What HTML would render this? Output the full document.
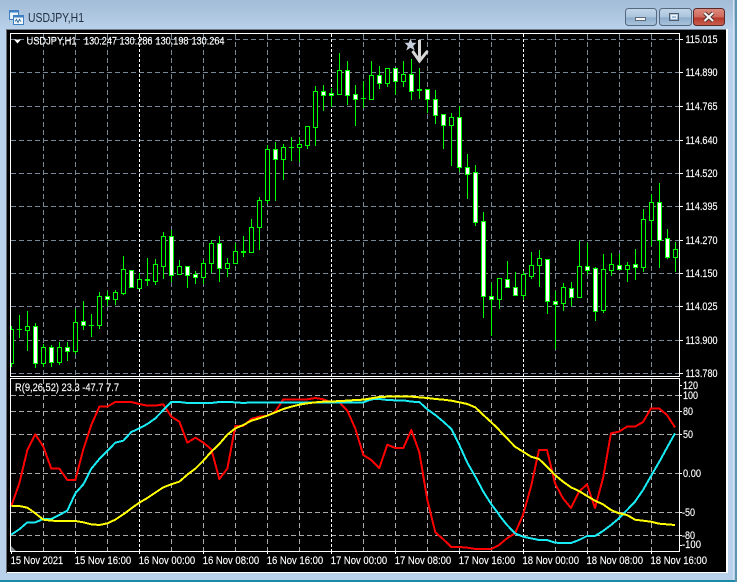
<!DOCTYPE html>
<html><head><meta charset="utf-8"><title>USDJPY,H1</title>
<style>html,body{margin:0;padding:0;background:#b9d1ea;overflow:hidden}svg{display:block}text{font-family:"Liberation Sans",sans-serif}</style></head>
<body>
<svg width="737" height="582" viewBox="0 0 737 582" xmlns="http://www.w3.org/2000/svg">
<defs>
<linearGradient id="bg" x1="0" y1="0" x2="0" y2="1"><stop offset="0" stop-color="#a3bcd7"/><stop offset="1" stop-color="#b9d1ea"/></linearGradient>
<linearGradient id="btn" x1="0" y1="0" x2="0" y2="1"><stop offset="0" stop-color="#c3d6e9"/><stop offset=".5" stop-color="#abc4dd"/><stop offset=".55" stop-color="#8fadcb"/><stop offset="1" stop-color="#a9c4de"/></linearGradient>
<linearGradient id="cls" x1="0" y1="0" x2="0" y2="1"><stop offset="0" stop-color="#dd8d80"/><stop offset=".5" stop-color="#cf6a5c"/><stop offset=".55" stop-color="#b5382a"/><stop offset="1" stop-color="#c9604f"/></linearGradient>
</defs>
<rect width="737" height="582" fill="#b9d1ea"/>
<rect width="737" height="30" fill="url(#bg)"/>
<rect y="580" width="737" height="2" fill="#1b8ca5"/>
<rect x="735" width="2" height="582" fill="#5f94b0"/>
<rect x="733" y="0" width="1" height="580" fill="#d5e4f2"/>
<!-- title icon -->
<g shape-rendering="crispEdges">
<rect x="9.5" y="10.5" width="9" height="9" fill="#eaf3fb" stroke="#3d7fc0"/>
<rect x="9.5" y="10.5" width="9" height="2" fill="#3d7fc0"/>
<rect x="13.5" y="15.5" width="10" height="9" fill="#f3f8fc" stroke="#3d7fc0"/>
<rect x="13.5" y="15.5" width="10" height="2" fill="#3d7fc0"/>
</g>
<path d="M15 21.5l1.5-2 1.5 3 1.500-3 1.500 2" fill="none" stroke="#3d6fa0" stroke-width="1"/>
<text x="28" y="22" font-size="12.500" fill="#1f2f42" textLength="56" lengthAdjust="spacingAndGlyphs">USDJPY,H1</text>
<!-- window buttons -->
<rect x="625.500" y="8.500" width="31" height="17" rx="3" fill="url(#btn)" stroke="#56687e"/>
<rect x="659.500" y="8.500" width="32" height="17" rx="3" fill="url(#btn)" stroke="#56687e"/>
<rect x="693.500" y="8.500" width="31" height="17" rx="3" fill="url(#cls)" stroke="#5a2a2a"/>
<rect x="635.500" y="17.500" width="10" height="3" fill="#f2f4f6" stroke="#5d6b7a"/>
<rect x="669.500" y="13.500" width="9" height="7" fill="none" stroke="#4e5d6e"/>
<rect x="671.500" y="15.500" width="5" height="3" fill="none" stroke="#f2f5f8"/>
<path d="M704.500 13l8.500 8M713 13l-8.500 8" stroke="#4b3030" stroke-width="4"/>
<path d="M704.500 13l8.500 8M713 13l-8.500 8" stroke="#f5f5f5" stroke-width="2.200"/>
<!-- chart client -->
<g shape-rendering="crispEdges">
<rect x="6" y="29" width="722" height="544" fill="#fff"/>
<rect x="6" y="29" width="720" height="1" fill="#707d8c"/>
<rect x="6" y="29" width="1" height="544" fill="#6a6a6a"/>
<rect x="7" y="30" width="719" height="542" fill="#000"/>
<!-- upper grid -->
<path d="M11 39.500H679M11 72.500H679M11 106.500H679M11 140.500H679M11 173.500H679M11 206.500H679M11 240.500H679M11 273.500H679M11 306.500H679M11 340.500H679M11 373.500H679" stroke="#778899" stroke-dasharray="5 3" fill="none"/>
<path d="M43.500 34V376M75.500 34V376M107.500 34V376M171.500 34V376M203.500 34V376M235.500 34V376M267.500 34V376M299.500 34V376M363.500 34V376M395.500 34V376M427.500 34V376M459.500 34V376M491.500 34V376M555.500 34V376M587.500 34V376M619.500 34V376M651.500 34V376" stroke="#778899" stroke-dasharray="5 3" fill="none"/>
<path d="M139.500 34V376M331.500 34V376M523.500 34V376" stroke="#fff" stroke-dasharray="3 2" fill="none"/>
<!-- lower grid -->
<path d="M11 395.500H679M11 411.500H679M11 434.500H679M11 473.500H679M11 512.500H679M11 535.500H679" stroke="#a9a9a9" stroke-dasharray="5 3" fill="none"/>
<path d="M43.500 379V551M75.500 379V551M107.500 379V551M171.500 379V551M203.500 379V551M235.500 379V551M267.500 379V551M299.500 379V551M363.500 379V551M395.500 379V551M427.500 379V551M459.500 379V551M491.500 379V551M555.500 379V551M587.500 379V551M619.500 379V551M651.500 379V551" stroke="#a9a9a9" stroke-dasharray="5 3" fill="none"/>
<path d="M139.500 379V551M331.500 379V551M523.500 379V551" stroke="#fff" stroke-dasharray="3 2" fill="none"/>
<!-- wicks -->
<path fill="none" stroke="#00ff00" d="M11.500 326V367M19.500 315V338M27.500 311V351M35.500 323V368M43.500 344V367M51.500 345V367M59.500 342V365M67.500 342V361M75.500 309V354M83.500 301V330M91.500 314V337M99.500 292V329M107.500 291V306M115.500 290V305M123.500 256V295M131.500 270V287M139.500 273V288M147.500 258V286M155.500 259V285M163.500 232V279M171.500 230V282M179.500 260V275M187.500 266V288M195.500 271V284M203.500 260V284M211.500 240V273M219.500 236V282M227.500 258V277M235.500 243V263M243.500 236V257M251.500 219V253M259.500 197V250M267.500 145V204M275.500 142V201M283.500 144V180M291.500 137V161M299.500 137V162M307.500 126V149M315.500 86V146M323.500 85V111M331.500 88V107M339.500 53V94M347.500 61V105M355.500 85V126M363.500 81V108M371.500 61V100M379.500 66V89M387.500 68V87M395.500 68V95M403.500 61V87M411.500 59V100M419.500 68V99M427.500 89V113M435.500 90V124M443.500 114V149M451.500 113V166M459.500 106V172M467.500 154V199M475.500 165V226M483.500 212V318M491.500 283V336M499.500 278V309M507.500 261V287M515.500 272V295M523.500 271V300M531.500 252V279M539.500 250V287M547.500 259V314M555.500 291V349M563.500 283V311M571.500 282V306M579.500 241V298M587.500 243V275M595.500 267V321M603.500 254V313M611.500 253V276M619.500 254V269M627.500 262V282M635.500 249V280M643.500 209V272M651.500 194V246M659.500 183V268M667.500 229V259M675.500 242V272"/>
<!-- dojis -->
<path fill="none" stroke="#00ff00" d="M17 329.500H22M89 325.500H94M145 280.500H150M145 279.500H150M241 252.500H246M241 251.500H246M289 147.500H294M361 98.500H366M417 89.500H422M417 90.500H422"/>
<!-- hollow bodies -->
<path fill="#000" stroke="#00ff00" d="M11 329.500H13.500V363.500H11M25.500 326.500h4V330.500h-4zM41.500 347.500h4V363.500h-4zM57.500 347.500h4V362.500h-4zM73.500 322.500h4V351.500h-4zM97.500 296.500h4V325.500h-4zM113.500 292.500h4V299.500h-4zM121.500 269.500h4V293.500h-4zM137.500 279.500h4V288.500h-4zM153.500 264.500h4V281.500h-4zM161.500 236.500h4V266.500h-4zM177.500 266.500h4V274.500h-4zM201.500 263.500h4V277.500h-4zM209.500 243.500h4V263.500h-4zM225.500 263.500h4V268.500h-4zM233.500 251.500h4V263.500h-4zM249.500 227.500h4V252.500h-4zM257.500 200.500h4V227.500h-4zM265.500 149.500h4V200.500h-4zM281.500 147.500h4V159.500h-4zM297.500 144.500h4V147.500h-4zM305.500 126.500h4V145.500h-4zM313.500 91.500h4V127.500h-4zM337.500 70.500h4V94.500h-4zM369.500 75.500h4V99.500h-4zM385.500 68.500h4V83.500h-4zM401.500 74.500h4V81.500h-4zM449.500 117.500h4V125.500h-4zM497.500 278.500h4V299.500h-4zM521.500 274.500h4V295.500h-4zM529.500 265.500h4V276.500h-4zM537.500 258.500h4V265.500h-4zM561.500 287.500h4V303.500h-4zM577.500 266.500h4V297.500h-4zM601.500 269.500h4V310.500h-4zM609.500 264.500h4V270.500h-4zM625.500 265.500h4V269.500h-4zM641.500 219.500h4V267.500h-4zM649.500 202.500h4V220.500h-4zM673.500 249.500h4V257.500h-4z"/>
<!-- white bodies -->
<path fill="#fff" stroke="#00ff00" d="M33.500 326.500h4V363.500h-4zM49.500 347.500h4V362.500h-4zM65.500 347.500h4V351.500h-4zM81.500 321.500h4V325.500h-4zM105.500 296.500h4V299.500h-4zM129.500 270.500h4V287.500h-4zM169.500 236.500h4V275.500h-4zM185.500 266.500h4V275.500h-4zM193.500 274.500h4V277.500h-4zM217.500 243.500h4V268.500h-4zM273.500 149.500h4V159.500h-4zM321.500 91.500h4V95.500h-4zM329.500 93.500h4V95.500h-4zM345.500 70.500h4V95.500h-4zM353.500 94.500h4V99.500h-4zM377.500 75.500h4V83.500h-4zM393.500 68.500h4V81.500h-4zM409.500 74.500h4V91.500h-4zM425.500 89.500h4V99.500h-4zM433.500 99.500h4V115.500h-4zM441.500 114.500h4V125.500h-4zM457.500 117.500h4V167.500h-4zM465.500 167.500h4V174.500h-4zM473.500 172.500h4V222.500h-4zM481.500 221.500h4V296.500h-4zM489.500 296.500h4V299.500h-4zM505.500 279.500h4V287.500h-4zM513.500 287.500h4V295.500h-4zM545.500 259.500h4V301.500h-4zM553.500 301.500h4V304.500h-4zM569.500 288.500h4V297.500h-4zM585.500 266.500h4V270.500h-4zM593.500 268.500h4V311.500h-4zM617.500 265.500h4V269.500h-4zM633.500 264.500h4V267.500h-4zM657.500 202.500h4V240.500h-4zM665.500 238.500h4V257.500h-4z"/>
</g>
<!-- signal marks -->
<polygon points="410.500,38.500 412.200,42.800 416.500,42.800 413.200,46 414.800,50.500 410.500,47.800 406.200,50.500 407.800,46 404.500,42.800 408.800,42.800" fill="#c9d0de"/>
<path d="M419.500 40V60M412.500 51L419.500 61L427.500 51" fill="none" stroke="#d8d8d8" stroke-width="3"/>
<!-- indicator lines -->
<g fill="none" stroke-width="6" shape-rendering="crispEdges" stroke-linejoin="round">
<g transform="translate(0 370) scale(.33333)">
<polyline stroke="#ff0000" points="34,408 58,340 82,240 106,193 130,230 154,296 178,296 202,330 226,330 250,238 274,165 298,110 322,110 346,96 370,96 394,96 418,102 442,107 466,107 490,103 514,140 538,155 562,218 586,203 610,218 634,238 658,327 682,296 706,168 730,168"/>
</g>
<g transform="translate(250 370) scale(.33333)">
<polyline stroke="#ff0000" points="-20,168 4,147 28,140 52,137 76,125 100,88 124,88 148,88 172,88 196,84 220,88 244,97 268,97 292,122 316,176 340,255 364,270 388,294 412,224 436,234 460,234 484,180 508,247 532,390 556,487 580,508 604,531 628,531 652,533 676,537 700,537 724,537 748,525"/>
</g>
<g transform="translate(490 370) scale(.33333)">
<polyline stroke="#ff0000" points="27,525 51,505 75,490 99,435 123,350 147,240 171,240 195,340 219,385 243,414 267,365 291,343 315,414 339,325 363,190 387,185 411,170 435,170 459,156 483,115 507,115 531,135 555,172"/>
</g>
<g transform="translate(0 370) scale(.33333)">
<polyline stroke="#18ecf5" points="34,494 58,478 82,457 106,457 130,447 154,447 178,435 202,422 226,370 250,343 274,296 298,267 322,243 346,218 370,212 394,186 418,175 442,162 466,145 490,120 514,96 538,96 562,99 586,99 610,99 634,99 658,96 682,96 706,97 730,99"/>
</g>
<g transform="translate(250 370) scale(.33333)">
<polyline stroke="#18ecf5" points="-20,99 4,97 340,97 364,88 388,87 412,90 436,91 460,91 484,95 508,96 532,118 556,135 580,155 604,177 628,225 652,278 676,320 700,365 724,403 748,435"/>
</g>
<g transform="translate(490 370) scale(.33333)">
<polyline stroke="#18ecf5" points="27,435 51,465 75,490 99,500 123,505 147,510 171,510 195,518 219,519 243,519 267,510 291,498 315,498 339,483 363,465 387,445 411,420 435,395 459,360 483,318 507,277 531,233 555,190"/>
</g>
<g transform="translate(0 370) scale(.33333)">
<polyline stroke="#ffff00" points="34,408 58,408 82,413 106,430 130,449 154,452 178,453 202,453 226,453 250,457 274,463 298,465 322,460 346,449 370,433 394,415 418,398 442,384 466,368 490,352 514,343 538,335 562,314 586,296 610,272 634,245 658,222 682,194 706,175 730,165"/>
</g>
<g transform="translate(250 370) scale(.33333)">
<polyline stroke="#ffff00" points="-20,165 4,152 28,145 52,137 76,127 100,117 124,110 148,104 172,100 196,97 220,95 244,95 268,93 292,92 316,90 340,89 364,85 388,81 412,80 436,80 460,80 484,80 508,82 532,84 556,87 580,89 604,92 628,97 652,102 676,112 700,135 724,157 748,180"/>
</g>
<g transform="translate(490 370) scale(.33333)">
<polyline stroke="#ffff00" points="27,180 51,205 75,230 99,245 123,260 147,267 171,290 195,315 219,335 243,352 267,363 291,378 315,392 339,403 363,420 387,430 411,435 435,449 459,452 483,455 507,461 531,463 555,465"/>
</g>
</g>
<!-- frames and ticks -->
<g shape-rendering="crispEdges" fill="none" stroke="#fff">
<path d="M10.500 33.500H679.500V376.500H10.500zM10.500 378.500H679.500V551.500H10.500z"/>
<path d="M11.500 552V554M75.500 552V554M139.500 552V554M203.500 552V554M267.500 552V554M331.500 552V554M395.500 552V554M459.500 552V554M523.500 552V554M587.500 552V554M651.500 552V554"/>
<path d="M680 39.500H683M680 72.500H683M680 106.500H683M680 140.500H683M680 173.500H683M680 206.500H683M680 240.500H683M680 273.500H683M680 306.500H683M680 340.500H683M680 373.500H683M680 385.500H682M680 395.500H682M680 411.500H682M680 434.500H682M680 473.500H682M680 512.500H682M680 535.500H682M680 545.500H682"/>
</g>
<polygon points="11,546 11,551 16,551" fill="#808890"/>
<polygon points="14,39.500 21,39.500 17.500,43.500" fill="#fff"/>
<g font-size="11" fill="#fff" stroke="#fff" stroke-width=".15">
<text x="26.500" y="44.500" textLength="50" lengthAdjust="spacingAndGlyphs">USDJPY,H1</text>
<text x="84" y="44.500" textLength="33" lengthAdjust="spacingAndGlyphs">130.247</text>
<text x="119.500" y="44.500" textLength="33" lengthAdjust="spacingAndGlyphs">130.286</text>
<text x="155.500" y="44.500" textLength="33" lengthAdjust="spacingAndGlyphs">130.198</text>
<text x="191.500" y="44.500" textLength="33" lengthAdjust="spacingAndGlyphs">130.264</text>
<text x="15" y="391" textLength="104" lengthAdjust="spacingAndGlyphs">R(9,26,52) 23.3 -47.7 7.7</text>
<text x="685.500" y="43" textLength="32" lengthAdjust="spacingAndGlyphs">115.015</text>
<text x="685.500" y="76" textLength="32" lengthAdjust="spacingAndGlyphs">114.890</text>
<text x="685.500" y="110" textLength="32" lengthAdjust="spacingAndGlyphs">114.765</text>
<text x="685.500" y="144" textLength="32" lengthAdjust="spacingAndGlyphs">114.640</text>
<text x="685.500" y="177" textLength="32" lengthAdjust="spacingAndGlyphs">114.520</text>
<text x="685.500" y="210" textLength="32" lengthAdjust="spacingAndGlyphs">114.395</text>
<text x="685.500" y="244" textLength="32" lengthAdjust="spacingAndGlyphs">114.270</text>
<text x="685.500" y="277" textLength="32" lengthAdjust="spacingAndGlyphs">114.150</text>
<text x="685.500" y="310" textLength="32" lengthAdjust="spacingAndGlyphs">114.025</text>
<text x="685.500" y="344" textLength="32" lengthAdjust="spacingAndGlyphs">113.900</text>
<text x="685.500" y="377" textLength="32" lengthAdjust="spacingAndGlyphs">113.780</text>
<text x="683" y="389" textLength="15" lengthAdjust="spacingAndGlyphs">120</text>
<text x="683" y="399" textLength="15" lengthAdjust="spacingAndGlyphs">100</text>
<text x="683" y="415" textLength="10" lengthAdjust="spacingAndGlyphs">80</text>
<text x="683" y="438" textLength="10" lengthAdjust="spacingAndGlyphs">50</text>
<text x="683" y="477" textLength="18" lengthAdjust="spacingAndGlyphs">0.00</text>
<text x="682" y="516" textLength="13" lengthAdjust="spacingAndGlyphs">-50</text>
<text x="682" y="539" textLength="13" lengthAdjust="spacingAndGlyphs">-80</text>
<text x="682" y="548" textLength="19" lengthAdjust="spacingAndGlyphs">-100</text>
<text x="10.700" y="564" textLength="52.500" lengthAdjust="spacingAndGlyphs">15 Nov 2021</text>
<text x="74.700" y="564" textLength="56.500" lengthAdjust="spacingAndGlyphs">15 Nov 16:00</text>
<text x="138.700" y="564" textLength="56.500" lengthAdjust="spacingAndGlyphs">16 Nov 00:00</text>
<text x="202.700" y="564" textLength="56.500" lengthAdjust="spacingAndGlyphs">16 Nov 08:00</text>
<text x="266.700" y="564" textLength="56.500" lengthAdjust="spacingAndGlyphs">16 Nov 16:00</text>
<text x="330.700" y="564" textLength="56.500" lengthAdjust="spacingAndGlyphs">17 Nov 00:00</text>
<text x="394.700" y="564" textLength="56.500" lengthAdjust="spacingAndGlyphs">17 Nov 08:00</text>
<text x="458.700" y="564" textLength="56.500" lengthAdjust="spacingAndGlyphs">17 Nov 16:00</text>
<text x="522.500" y="564" textLength="56.500" lengthAdjust="spacingAndGlyphs">18 Nov 00:00</text>
<text x="586.500" y="564" textLength="56.500" lengthAdjust="spacingAndGlyphs">18 Nov 08:00</text>
<text x="650.500" y="564" textLength="56.500" lengthAdjust="spacingAndGlyphs">18 Nov 16:00</text>
</g>
</svg>
</body></html>
